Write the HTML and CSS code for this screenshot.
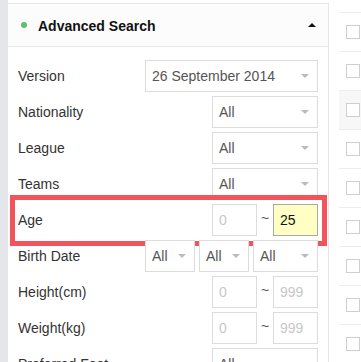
FILE: index.html
```html
<!DOCTYPE html>
<html>
<head>
<meta charset="utf-8">
<link rel="stylesheet" href="styles.css">
</head>
<body>
<div class="page">
  <div class="strip"></div>
  <div class="panel">
    <div class="panel-head">
      <span class="dot"></span>
      <span class="title">Advanced Search</span>
      <span class="caret-up"></span>
    </div>
    <div class="panel-body">
      <div class="row">
        <span class="label">Version</span>
        <div class="select w173"><span>26 September 2014</span><i class="caret"></i></div>
      </div>
      <div class="row">
        <span class="label">Nationality</span>
        <div class="select w106"><span>All</span><i class="caret"></i></div>
      </div>
      <div class="row">
        <span class="label">League</span>
        <div class="select w106"><span>All</span><i class="caret"></i></div>
      </div>
      <div class="row">
        <span class="label">Teams</span>
        <div class="select w106"><span>All</span><i class="caret"></i></div>
      </div>
      <div class="row row-age">
        <span class="label">Age</span>
        <div class="range">
          <div class="input placeholder">0</div>
          <span class="tilde">~</span>
          <div class="input filled">25</div>
        </div>
        <div class="highlight"></div>
      </div>
      <div class="row">
        <span class="label">Birth Date</span>
        <div class="triple">
          <div class="select w50"><span>All</span><i class="caret"></i></div>
          <div class="select w50"><span>All</span><i class="caret"></i></div>
          <div class="select w65"><span>All</span><i class="caret"></i></div>
        </div>
      </div>
      <div class="row">
        <span class="label">Height(cm)</span>
        <div class="range">
          <div class="input placeholder">0</div>
          <span class="tilde">~</span>
          <div class="input placeholder">999</div>
        </div>
      </div>
      <div class="row">
        <span class="label">Weight(kg)</span>
        <div class="range">
          <div class="input placeholder">0</div>
          <span class="tilde">~</span>
          <div class="input placeholder">999</div>
        </div>
      </div>
      <div class="row">
        <span class="label">Preferred Foot</span>
        <div class="select w106"><span>All</span><i class="caret"></i></div>
      </div>
    </div>
  </div>
  <div class="results">
    <div class="res-row"><span class="check"></span></div>
    <div class="res-row"><span class="check"></span></div>
    <div class="res-row shaded"><span class="check"></span></div>
    <div class="res-row"><span class="check"></span></div>
    <div class="res-row"><span class="check"></span></div>
    <div class="res-row"><span class="check"></span></div>
    <div class="res-row"><span class="check"></span></div>
    <div class="res-row"><span class="check"></span></div>
    <div class="res-row"><span class="check"></span></div>
  </div>
</div>
</body>
</html>
```

FILE: styles.css
```css
* { box-sizing: border-box; }
html, body {
  margin: 0;
  padding: 0;
  background: #fff;
  font-family: "Liberation Sans", Arial, sans-serif;
  font-size: 14px;
  color: #333;
  overflow: hidden;
}
.page {
  display: flex;
  width: 361px;
  height: 362px;
  overflow: hidden;
}
.strip {
  width: 8px;
  flex: none;
  background: #e5e6ea;
}
.panel {
  position: relative;
  width: 321px;
  flex: none;
  margin-top: 3px;
  border-top: 1px solid #e6e6e6;
  border-right: 1px solid #e6e6e6;
  background: #fff;
}
.panel-head {
  display: flex;
  align-items: center;
  height: 43px;
  padding: 0 12px 0 13px;
  background: #fcfcfc;
  border-bottom: 1px solid #e6e6e6;
}
.dot {
  width: 6px;
  height: 6px;
  border-radius: 50%;
  background: #5cbf6c;
  margin-right: 11px;
}
.title {
  flex: 1;
  font-weight: bold;
  font-size: 14px;
  color: #111;
  padding-top: 1px;
}
.caret-up {
  width: 0;
  height: 0;
  border-left: 4px solid transparent;
  border-right: 4px solid transparent;
  border-bottom: 4px solid #111;
  margin-right: 0;
}
.panel-body {
  display: flex;
  flex-direction: column;
  gap: 4px;
  padding: 13px 10px 0 10px;
}
.row {
  position: relative;
  display: flex;
  align-items: center;
  height: 32px;
}
.label {
  flex: 1;
  color: #333;
}
.select {
  position: relative;
  display: flex;
  align-items: center;
  height: 32px;
  padding-left: 6px;
  border: 1px solid #dcdcdc;
  background: #fff;
  color: #555;
}
.select span { flex: 1; white-space: nowrap; }
.caret {
  width: 0;
  height: 0;
  border-left: 4px solid transparent;
  border-right: 4px solid transparent;
  border-top: 4px solid #bbb;
  margin-right: 8px;
}
.w173 { width: 173px; }
.w106 { width: 106px; }
.w50 { width: 50px; }
.w65 { width: 65px; }
.triple {
  display: flex;
  gap: 4px;
}
.range {
  display: flex;
  align-items: center;
  width: 106px;
}
.input {
  width: 45px;
  height: 32px;
  display: flex;
  align-items: center;
  padding-left: 6px;
  border: 1px solid #dcdcdc;
  background: #fff;
}
.placeholder { color: #c8c8c8; }
.filled {
  background: #ffffc4;
  border-color: #a8a8a8;
  color: #111;
}
.tilde {
  width: 16px;
  text-align: center;
  color: #555;
  margin-top: -5px;
}
.highlight {
  position: absolute;
  left: -8px;
  right: -9px;
  top: -9px;
  bottom: -10px;
  border: 5px solid #f2545b;
  pointer-events: none;
}
.results {
  flex: 1;
  padding-left: 10px;
  padding-top: 12px;
}
.res-row {
  height: 39px;
  border-top: 1px solid #ededed;
  display: flex;
  align-items: center;
  padding-left: 7px;
}
.res-row.shaded { background: #f7f7f7; }
.check {
  width: 14px;
  height: 14px;
  border: 1px solid #cfcfcf;
  background: #fff;
  flex: none;
}
```
